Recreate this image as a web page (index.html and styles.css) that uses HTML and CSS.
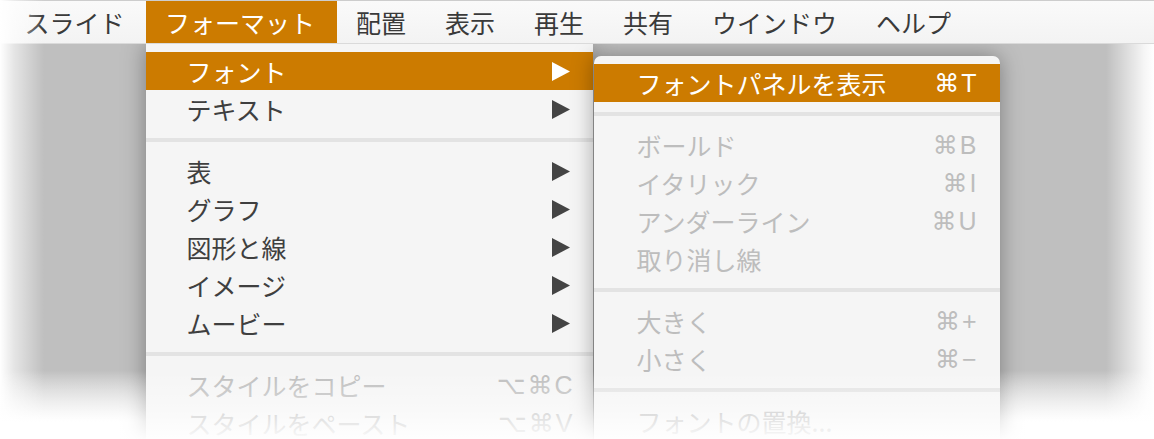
FILE: index.html
```html
<!DOCTYPE html>
<html lang="ja">
<head>
<meta charset="utf-8">
<title>フォーマット メニュー</title>
<link rel="stylesheet" href="styles.css">
</head>
<body>
<div class="screen">
  <nav class="menubar">
    <div class="mb-item first">スライド</div>
    <div class="mb-item active">フォーマット
      <div class="menu main-menu">
        <div class="row hl">
          <span class="label">フォント</span>
          <svg class="arrow" viewBox="0 0 18 19"><polygon points="0,0 18,9.5 0,19"/></svg>
          <div class="menu sub-menu">
            <div class="row hl"><span class="label">フォントパネルを表示</span><span class="sc">⌘T</span></div>
            <div class="sep"></div>
            <div class="row disabled"><span class="label">ボールド</span><span class="sc">⌘B</span></div>
            <div class="row disabled"><span class="label">イタリック</span><span class="sc">⌘I</span></div>
            <div class="row disabled"><span class="label">アンダーライン</span><span class="sc">⌘U</span></div>
            <div class="row disabled"><span class="label">取り消し線</span></div>
            <div class="sep"></div>
            <div class="row disabled"><span class="label">大きく</span><span class="sc">⌘+</span></div>
            <div class="row disabled"><span class="label">小さく</span><span class="sc">⌘−</span></div>
            <div class="sep"></div>
            <div class="row disabled"><span class="label">フォントの置換...</span></div>
          </div>
        </div>
        <div class="row"><span class="label">テキスト</span><svg class="arrow" viewBox="0 0 18 19"><polygon points="0,0 18,9.5 0,19"/></svg></div>
        <div class="sep"></div>
        <div class="row"><span class="label">表</span><svg class="arrow" viewBox="0 0 18 19"><polygon points="0,0 18,9.5 0,19"/></svg></div>
        <div class="row"><span class="label">グラフ</span><svg class="arrow" viewBox="0 0 18 19"><polygon points="0,0 18,9.5 0,19"/></svg></div>
        <div class="row"><span class="label">図形と線</span><svg class="arrow" viewBox="0 0 18 19"><polygon points="0,0 18,9.5 0,19"/></svg></div>
        <div class="row"><span class="label">イメージ</span><svg class="arrow" viewBox="0 0 18 19"><polygon points="0,0 18,9.5 0,19"/></svg></div>
        <div class="row"><span class="label">ムービー</span><svg class="arrow" viewBox="0 0 18 19"><polygon points="0,0 18,9.5 0,19"/></svg></div>
        <div class="sep"></div>
        <div class="row disabled"><span class="label">スタイルをコピー</span><span class="sc">⌥⌘C</span></div>
        <div class="row disabled"><span class="label">スタイルをペースト</span><span class="sc">⌥⌘V</span></div>
      </div>
    </div>
    <div class="mb-item">配置</div>
    <div class="mb-item">表示</div>
    <div class="mb-item">再生</div>
    <div class="mb-item">共有</div>
    <div class="mb-item">ウインドウ</div>
    <div class="mb-item">ヘルプ</div>
  </nav>
  <div class="desktop"></div>
  <div class="fade fade-left"></div>
  <div class="fade fade-right"></div>
  <div class="fade fade-bottom"></div>
</div>
</body>
</html>
```
FILE: styles.css
```css
html, body {
  margin: 0;
  padding: 0;
  background: #fff;
}

.screen {
  width: 1154px;
  height: 439px;
  position: relative;
  overflow: hidden;
  display: flex;
  flex-direction: column;
  background: #fff;
  font-family: "Noto Sans CJK JP", "Noto Sans", sans-serif;
}

.menubar {
  display: flex;
  height: 42px;
  border-top: 1px solid #cdcdcd;
  border-bottom: 1px solid #dadada;
  background: linear-gradient(#fafafa, #f3f3f3);
  padding-left: 5px;
  position: relative;
  z-index: 2;
  font-size: 25px;
  color: #3a3a3a;
}

.mb-item {
  padding: 0 19.5px;
  line-height: 42px;
  position: relative;
  white-space: nowrap;
}

.mb-item.first {
  padding-right: 21px;
}

.mb-item.active {
  background: #cc7b00;
  color: #fff;
  padding-right: 21.5px;
}

.desktop {
  flex: 1;
  background: linear-gradient(#bfbfbf 0, #bfbfbf 326px, #ffffff 378px);
}

.menu {
  position: absolute;
  background: #f5f5f5;
  box-shadow: 0 0 22px rgba(0, 0, 0, 0.35);
  font-size: 25px;
  line-height: 38px;
  padding: 8px 0;
  color: #3f3f3f;
  white-space: nowrap;
}

.main-menu {
  top: calc(100% + 1px);
  left: 0;
  width: 447px;
  clip-path: inset(0 -600px -100px -60px);
}

.sub-menu {
  top: 4px;
  left: calc(100% + 1px);
  width: 406px;
  border-radius: 7px 7px 0 0;
  z-index: 1;
  color: #3f3f3f;
}

.row {
  height: 38px;
  display: flex;
  align-items: center;
  padding: 0 18px 0 41px;
  position: relative;
}

.sub-menu .row {
  padding: 0 21px 0 43px;
}

.row.hl,
.sub-menu .row.hl {
  background: #cc7b00;
  color: #fff;
}

.row.disabled {
  color: #bdbdbd;
}

.label {
  flex: 1;
}

.arrow {
  width: 18px;
  height: 19px;
  fill: currentColor;
  margin-right: 5px;
  flex: none;
}

.row .arrow {
  fill: #444;
}

.row.hl .arrow {
  fill: #fff;
}

.sc {
  font-family: "Liberation Sans", "DejaVu Sans", sans-serif;
  letter-spacing: 2px;
}

.sep {
  height: 4px;
  background: #e3e3e3;
  margin: 10px 0;
}

.fade {
  position: absolute;
  pointer-events: none;
  z-index: 5;
}

.fade-left {
  left: 0;
  top: 0;
  bottom: 0;
  width: 48px;
  background: linear-gradient(to right, #fff 0, rgba(255, 255, 255, 0.6) 14px, rgba(255, 255, 255, 0) 44px);
}

.fade-right {
  right: 0;
  top: 44px;
  bottom: 0;
  width: 60px;
  background: linear-gradient(to left, #fff 0, rgba(255, 255, 255, 0.85) 10px, rgba(255, 255, 255, 0) 48px);
}

.fade-bottom {
  left: 0;
  right: 0;
  bottom: 0;
  height: 68px;
  background: linear-gradient(to bottom, rgba(255, 255, 255, 0), rgba(255, 255, 255, 0.4) 38px, rgba(255, 255, 255, 0.92));
}
```
